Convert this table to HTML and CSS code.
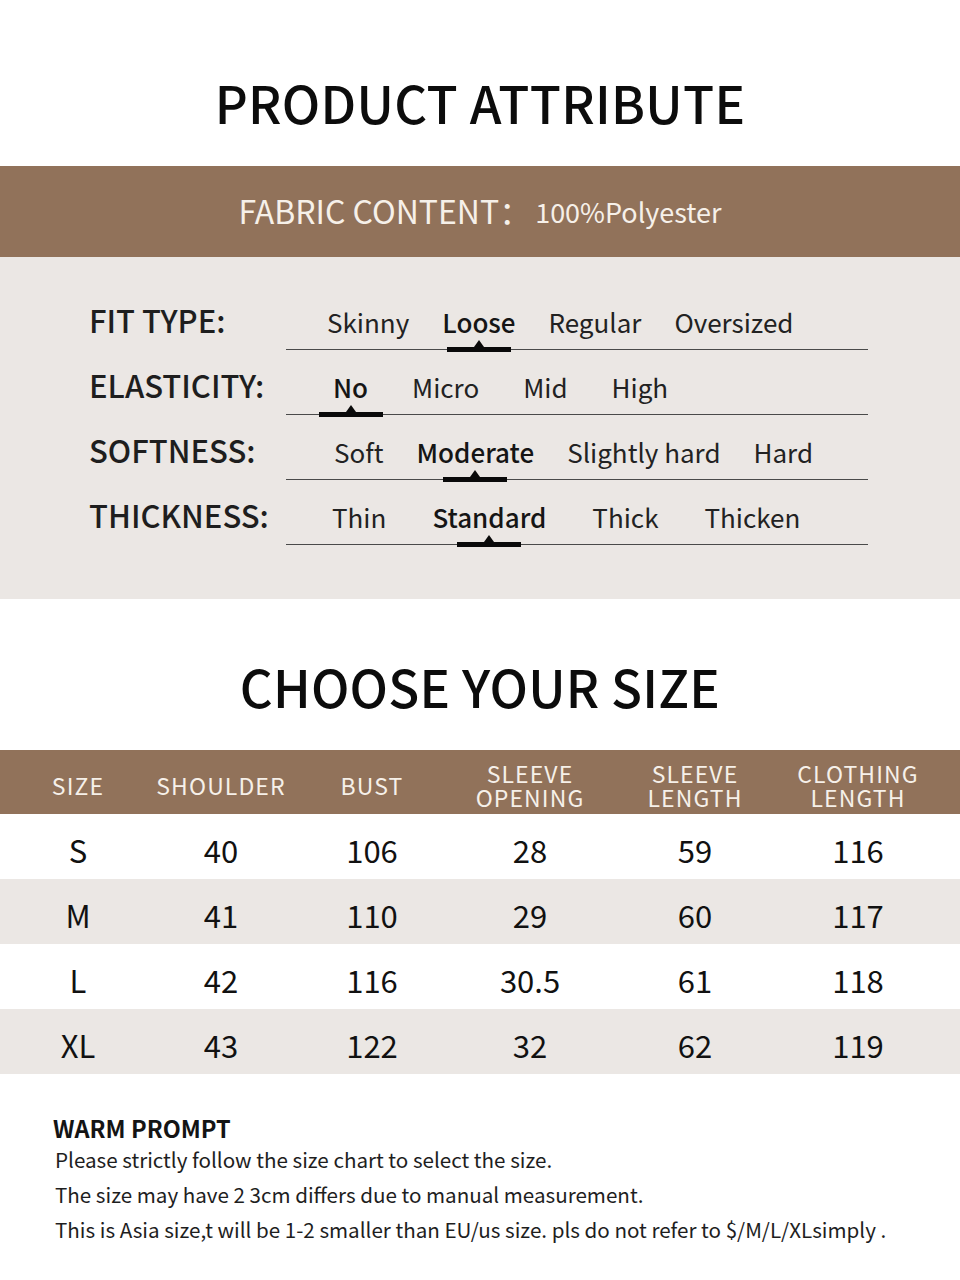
FILE: index.html
```html
<!DOCTYPE html>
<html lang="en">
<head>
<meta charset="utf-8">
<title>Product Attribute</title>
<link rel="stylesheet" href="styles.css">
</head>
<body>
<section class="title-block">
  <h1 class="title">PRODUCT ATTRIBUTE</h1>
</section>
<div class="fabric">
  <span class="fabric-label">FABRIC CONTENT：</span><span class="fabric-value">100%Polyester</span>
</div>
<section class="attrs">
  <div class="attr-row">
    <div class="attr-label">FIT TYPE:</div>
    <div class="opts opts-fit">
      <span class="opt">Skinny</span>
      <span class="opt sel">Loose</span>
      <span class="opt">Regular</span>
      <span class="opt">Oversized</span>
    </div>
  </div>
  <div class="attr-row">
    <div class="attr-label">ELASTICITY:</div>
    <div class="opts opts-elastic">
      <span class="opt sel">No</span>
      <span class="opt">Micro</span>
      <span class="opt">Mid</span>
      <span class="opt">High</span>
    </div>
  </div>
  <div class="attr-row">
    <div class="attr-label">SOFTNESS:</div>
    <div class="opts opts-soft">
      <span class="opt">Soft</span>
      <span class="opt sel">Moderate</span>
      <span class="opt">Slightly hard</span>
      <span class="opt">Hard</span>
    </div>
  </div>
  <div class="attr-row">
    <div class="attr-label">THICKNESS:</div>
    <div class="opts opts-thick">
      <span class="opt">Thin</span>
      <span class="opt sel">Standard</span>
      <span class="opt">Thick</span>
      <span class="opt">Thicken</span>
    </div>
  </div>
</section>
<section class="title-block title-block-2">
  <h2 class="title title-2">CHOOSE YOUR SIZE</h2>
</section>
<div class="size-table">
  <div class="trow thead">
    <div class="cell">SIZE</div>
    <div class="cell">SHOULDER</div>
    <div class="cell">BUST</div>
    <div class="cell"><span class="hl">SLEEVE</span><span class="hl">OPENING</span></div>
    <div class="cell"><span class="hl">SLEEVE</span><span class="hl">LENGTH</span></div>
    <div class="cell"><span class="hl">CLOTHING</span><span class="hl">LENGTH</span></div>
  </div>
  <div class="trow">
    <div class="cell">S</div><div class="cell">40</div><div class="cell">106</div><div class="cell">28</div><div class="cell">59</div><div class="cell">116</div>
  </div>
  <div class="trow alt">
    <div class="cell">M</div><div class="cell">41</div><div class="cell">110</div><div class="cell">29</div><div class="cell">60</div><div class="cell">117</div>
  </div>
  <div class="trow">
    <div class="cell">L</div><div class="cell">42</div><div class="cell">116</div><div class="cell">30.5</div><div class="cell">61</div><div class="cell">118</div>
  </div>
  <div class="trow alt">
    <div class="cell">XL</div><div class="cell">43</div><div class="cell">122</div><div class="cell">32</div><div class="cell">62</div><div class="cell">119</div>
  </div>
</div>
<section class="prompt">
  <h3 class="prompt-title">WARM PROMPT</h3>
  <p class="prompt-line">Please strictly follow the size chart to select the size.</p>
  <p class="prompt-line">The size may have 2 3cm differs due to manual measurement.</p>
  <p class="prompt-line">This is Asia size,t will be 1-2 smaller than EU/us size. pls do not refer to $/M/L/XLsimply .</p>
</section>
</body>
</html>
```
FILE: styles.css
```css
* { box-sizing: border-box; }
html, body {
  margin: 0;
  padding: 0;
  background: #ffffff;
  width: 960px;
  font-family: "Noto Sans CJK SC", "Noto Sans", sans-serif;
  color: #1c1c1c;
}

.title-block {
  height: 166px;
  display: flex;
  align-items: center;
  justify-content: center;
  padding-top: 38px;
}
.title {
  margin: 0;
  font-size: 51px;
  font-weight: 500;
  color: #0c0c0c;
  line-height: 1;
  letter-spacing: 0.3px;
}
.title-block-2 {
  height: 151px;
  padding-top: 24px;
}
.title-2 { font-size: 51px; letter-spacing: 0.2px; }

.fabric {
  height: 91px;
  background: #91725a;
  display: flex;
  align-items: center;
  justify-content: center;
  color: #f6f0e9;
  padding-bottom: 4px;
}
.fabric-label {
  font-size: 32px;
  font-weight: 400;
}
.fabric-value {
  font-size: 27px;
  margin-left: 4px;
  padding-top: 4px;
}

.attrs {
  background: #ebe7e4;
  padding: 28px 0 54px;
}
.attr-row {
  display: flex;
  align-items: baseline;
  padding-left: 89px;
  height: 65px;
}
.attr-label {
  width: 197px;
  font-size: 31px;
  font-weight: 500;
  color: #1e1e1e;
  line-height: 34px;
}
.opts {
  width: 582px;
  height: 65px;
  display: flex;
  align-items: flex-end;
  padding-bottom: 10px;
  border-bottom: 1px solid #4a4a4a;
}
.opt {
  position: relative;
  font-size: 26px;
  line-height: 34px;
  color: #222;
  white-space: nowrap;
}
.opt.sel { font-weight: 500; color: #151515; }
.opt.sel::after {
  content: "";
  position: absolute;
  left: 50%;
  margin-left: -32px;
  width: 64px;
  height: 5px;
  bottom: -13px;
  background: #0a0a0a;
}
.opt.sel::before {
  content: "";
  position: absolute;
  left: 50%;
  margin-left: -5px;
  bottom: -8px;
  width: 0;
  height: 0;
  border-left: 5px solid transparent;
  border-right: 5px solid transparent;
  border-bottom: 7px solid #0a0a0a;
}
.opts-fit { padding-left: 41px; gap: 33px; }
.opts-elastic { padding-left: 47px; gap: 44px; }
.opts-soft { padding-left: 48px; gap: 33px; }
.opts-thick { padding-left: 46px; gap: 46px; }

.size-table { width: 960px; }
.trow {
  display: grid;
  grid-template-columns: 156px 130px 172px 144px 186px 140px;
  height: 65px;
  align-items: center;
  background: #ffffff;
}
.trow.alt { background: #ebe7e4; }
.trow .cell {
  text-align: center;
  font-size: 31px;
  color: #111;
  line-height: 1;
  padding-top: 5px;
}
.trow.thead {
  height: 64px;
  background: #91725a;
}
.trow.thead .cell {
  font-size: 23px;
  line-height: 24px;
  color: #f6f0e9;
  padding-top: 6px;
  letter-spacing: 1.1px;
  display: flex;
  flex-direction: column;
  align-items: center;
}
.hl {
  display: block;
  height: 24px;
  line-height: 24px;
}

.prompt {
  padding: 40px 0 0 53px;
}
.prompt-title {
  margin: 0;
  font-size: 23.5px;
  font-weight: 700;
  line-height: 28px;
  color: #141414;
}
.prompt-line {
  margin: 0;
  padding-left: 2px;
  font-size: 20.6px;
  line-height: 35px;
  color: #1e1e1e;
}
```
